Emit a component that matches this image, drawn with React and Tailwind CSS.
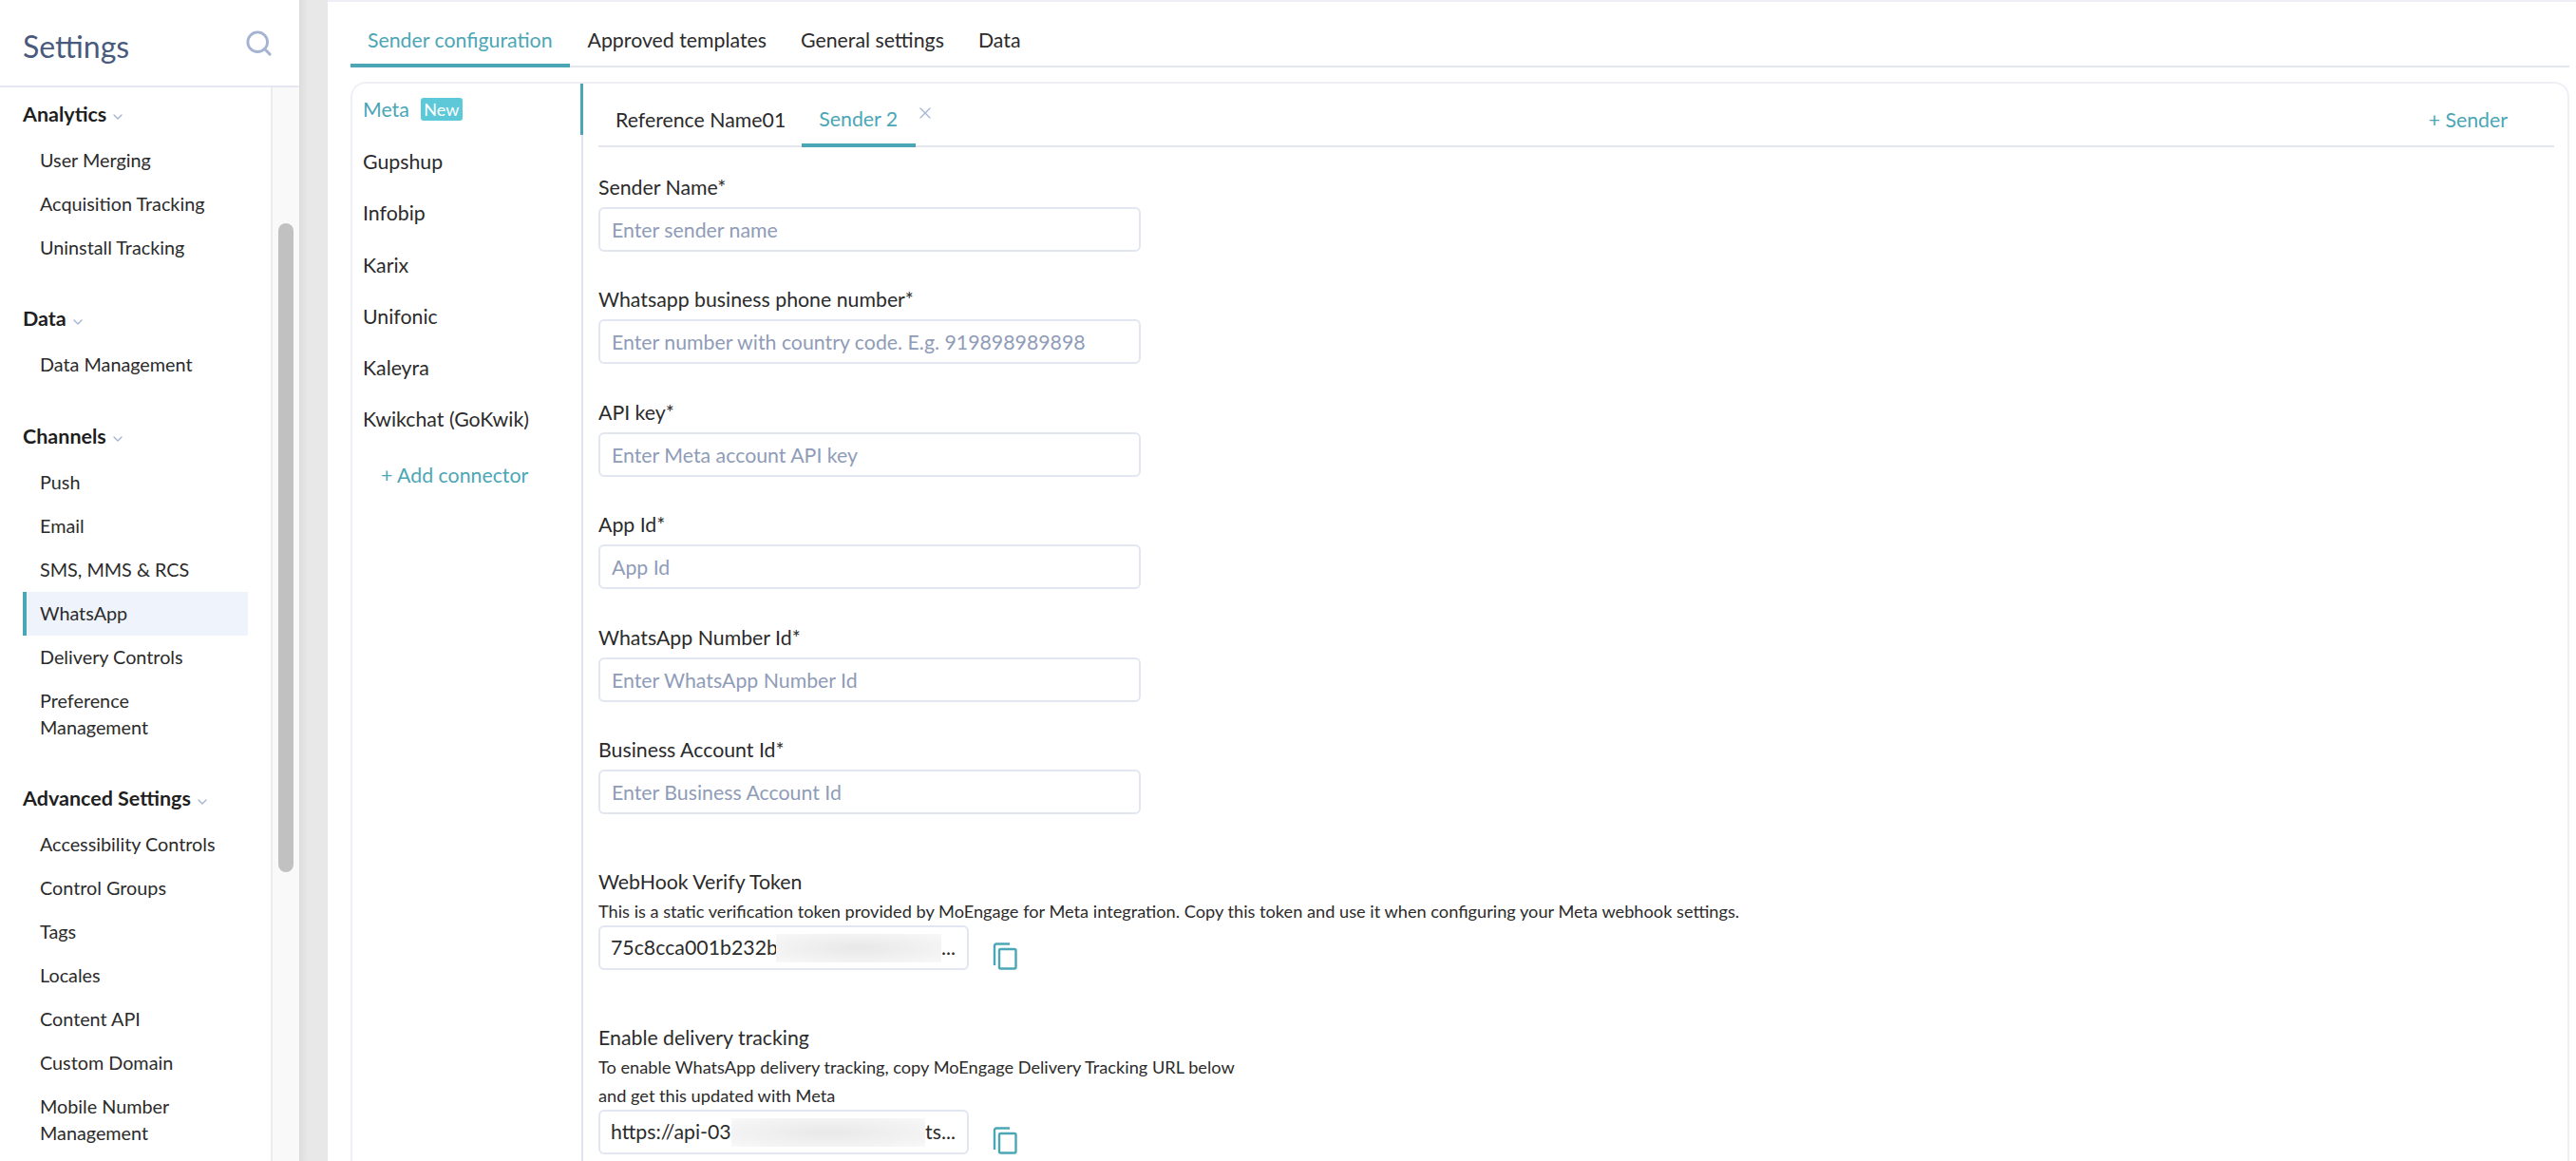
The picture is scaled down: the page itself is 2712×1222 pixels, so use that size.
import { Search, ChevronDown, X } from "lucide-react";

const FONT = "font-['Lato','Noto_Sans',sans-serif]";

const NAV = [
  { title: "Analytics", items: ["User Merging", "Acquisition Tracking", "Uninstall Tracking"] },
  { title: "Data", items: ["Data Management"] },
  { title: "Channels", items: ["Push", "Email", "SMS, MMS & RCS", "WhatsApp", "Delivery Controls", "Preference Management"] },
  {
    title: "Advanced Settings",
    items: ["Accessibility Controls", "Control Groups", "Tags", "Locales", "Content API", "Custom Domain", "Mobile Number Management"],
  },
];

const CONNECTORS = ["Gupshup", "Infobip", "Karix", "Unifonic", "Kaleyra", "Kwikchat (GoKwik)"];

const FIELDS = [
  { label: "Sender Name*", placeholder: "Enter sender name" },
  { label: "Whatsapp business phone number*", placeholder: "Enter number with country code. E.g. 919898989898" },
  { label: "API key*", placeholder: "Enter Meta account API key" },
  { label: "App Id*", placeholder: "App Id" },
  { label: "WhatsApp Number Id*", placeholder: "Enter WhatsApp Number Id" },
  { label: "Business Account Id*", placeholder: "Enter Business Account Id" },
];

function CopyIcon() {
  return (
    <svg width="26" height="29" viewBox="0 0 26 29" fill="none" stroke="#4ba6b5" strokeWidth="2.4" className="ml-[25px] mt-[18px] shrink-0">
      <path d="M2 24V3.500A2 2 0 0 1 4 1.500H18" />
      <rect x="7" y="7" width="17.500" height="20.500" rx="1.500" />
    </svg>
  );
}

function Sidebar() {
  return (
    <aside className="flex h-full w-[315px] shrink-0 flex-col bg-white">
      <div className="flex h-[92px] shrink-0 items-center justify-between border-b-2 border-[#e4e7ef] pl-[24px] pr-[27px]">
        <span className="pt-[8px] text-[32px] leading-none text-[#4a5a7d]">Settings</span>
        <Search size={31} strokeWidth={2.2} className="text-[#a5b3d3]" />
      </div>
      <div className="flex min-h-0 flex-1">
        <nav className="min-w-0 flex-1 overflow-hidden pl-[24px] pr-[24px] pt-[14px]">
          {NAV.map((sec) => (
            <div key={sec.title} className="mb-[38px]">
              <div className="mb-[11.500px] flex h-[28px] items-center text-[21.500px] font-bold text-[#1f1f1f]">
                {sec.title}
                <ChevronDown size={16} className="ml-[4px] mt-[6px] text-[#a5b3d3]" />
              </div>
              {sec.items.map((item) => {
                const active = item === "WhatsApp";
                return (
                  <div
                    key={item}
                    className={
                      "flex min-h-[45.700px] items-center border-l-4 pb-[10px] pl-[14px] pr-[24px] pt-[8px] text-[19.800px] leading-[28px] text-[#2b2b2b] " +
                      (active ? "border-[#4ba6b5] bg-[#eff3fb]" : "border-transparent")
                    }
                  >
                    {item}
                  </div>
                );
              })}
            </div>
          ))}
        </nav>
        <div className="w-[30px] shrink-0 border-l-2 border-[#ececec] bg-[#f9f9f9] pl-[6px] pt-[143px]">
          <div className="h-[683px] w-[16px] rounded-full bg-[#c1c1c1]" />
        </div>
      </div>
    </aside>
  );
}

function Field({ label, placeholder }) {
  return (
    <div className="mb-[36.400px]">
      <div className="mb-[7px] text-[21.300px] leading-[28px] text-[#2b2b2b]">{label}</div>
      <input
        readOnly
        placeholder={placeholder}
        className="block h-[47px] w-[571px] rounded-[6px] border-2 border-[#e1e6f1] bg-white px-[12px] pt-[1px] text-[21.300px] outline-none placeholder:text-[#8f9cb8]"
      />
    </div>
  );
}

function Blur({ className }) {
  return <div className={"h-[30px] bg-[radial-gradient(ellipse_at_center,#e8e8e8,#f8f8f8)] " + className} />;
}

export default function App() {
  return (
    <div className={"flex h-screen overflow-hidden bg-white " + FONT}>
      <Sidebar />
      <div className="h-full w-[30px] shrink-0 bg-gradient-to-r from-[#dcdcdc] to-[#e8e8e8] to-30%" />
      <main className="min-w-0 flex-1 overflow-hidden border-t-2 border-[#eeeef6] pl-[24px] pr-[7px]">
        <div className="flex h-[69px] items-end border-b-2 border-[#e4e6ef] text-[21.300px] text-[#2b2b2b]">
          <div className="-mb-[2px] flex h-[54px] items-center border-b-[4px] border-[#4ba6b5] px-[18px] pt-[2px] text-[#4ba6b5]">Sender configuration</div>
          <div className="flex h-[52px] items-center px-[18px] pl-[19px]">Approved templates</div>
          <div className="flex h-[52px] items-center px-[18px]">General settings</div>
          <div className="flex h-[52px] items-center px-[18px]">Data</div>
        </div>

        <div className="mt-[15px] flex min-h-[1200px] rounded-t-[16px] border-2 border-[#eef0f6] text-[21.300px] text-[#2b2b2b]">
          <div className="w-[243px] shrink-0 border-r-2 border-[#dfe4f0]">
            <div className="-mr-[2px] flex h-[54px] items-center border-r-[3px] border-[#4ba6b5] pl-[11px] pt-[2px] text-[#4ba6b5]">
              Meta
              <span className="-mt-[2px] ml-[12px] flex h-[24px] w-[44px] items-center justify-center rounded-[3px] bg-[#5cc8d8] text-[18px] text-white">New</span>
            </div>
            <div className="pt-[2px]">
              {CONNECTORS.map((c) => (
                <div key={c} className="flex h-[54.200px] items-center pl-[11px]">{c}</div>
              ))}
              <div className="flex h-[64px] items-center pl-[30px] text-[#4ba6b5]">+ Add connector</div>
            </div>
          </div>

          <div className="min-w-0 flex-1 pl-[16px] pr-[14px]">
            <div className="flex h-[67px] items-end border-b-2 border-[#e4e6ef]">
              <div className="flex h-[50px] items-center pb-[3px] pl-[18px] pr-[17px]">Reference Name01</div>
              <div className="-mb-[2px] flex h-[52px] w-[120px] items-center border-b-[4px] border-[#4ba6b5] pb-[3px] pl-[18px] text-[#4ba6b5]">Sender 2</div>
              <X size={20} strokeWidth={1.5} className="mb-[24px] text-[#a5b3d3]" />
              <div className="ml-auto flex h-[50px] items-center pb-[3px] pr-[49px] text-[#4ba6b5]">+ Sender</div>
            </div>

            <div className="pt-[28px]">
              {FIELDS.map((f) => (
                <Field key={f.label} {...f} />
              ))}
            </div>

            <div className="mt-[21px] pt-[21px] leading-[28px]">WebHook Verify Token</div>
            <div className="mt-[2px] text-[18.200px] leading-[30px]">
              This is a static verification token provided by MoEngage for Meta integration. Copy this token and use it when configuring your Meta webhook settings.
            </div>
            <div className="flex">
              <div className="flex h-[47px] w-[390px] items-center rounded-[6px] border-2 border-[#e1e6f1] pl-[11px] pr-[12px]">
                <span className="whitespace-nowrap">75c8cca001b232b</span>
                <Blur className="-ml-[2px] flex-1" />
                <span>...</span>
              </div>
              <CopyIcon />
            </div>

            <div className="mt-[57px] leading-[28px]">Enable delivery tracking</div>
            <div className="mt-[2px] text-[18.200px] leading-[30px]">
              To enable WhatsApp delivery tracking, copy MoEngage Delivery Tracking URL below
              <br />
              and get this updated with Meta
            </div>
            <div className="flex">
              <div className="flex h-[47px] w-[390px] items-center rounded-[6px] border-2 border-[#e1e6f1] pl-[11px] pr-[12px]">
                <span className="whitespace-nowrap">https://api-03</span>
                <Blur className="flex-1" />
                <span>ts...</span>
              </div>
              <CopyIcon />
            </div>
          </div>
        </div>
      </main>
    </div>
  );
}
